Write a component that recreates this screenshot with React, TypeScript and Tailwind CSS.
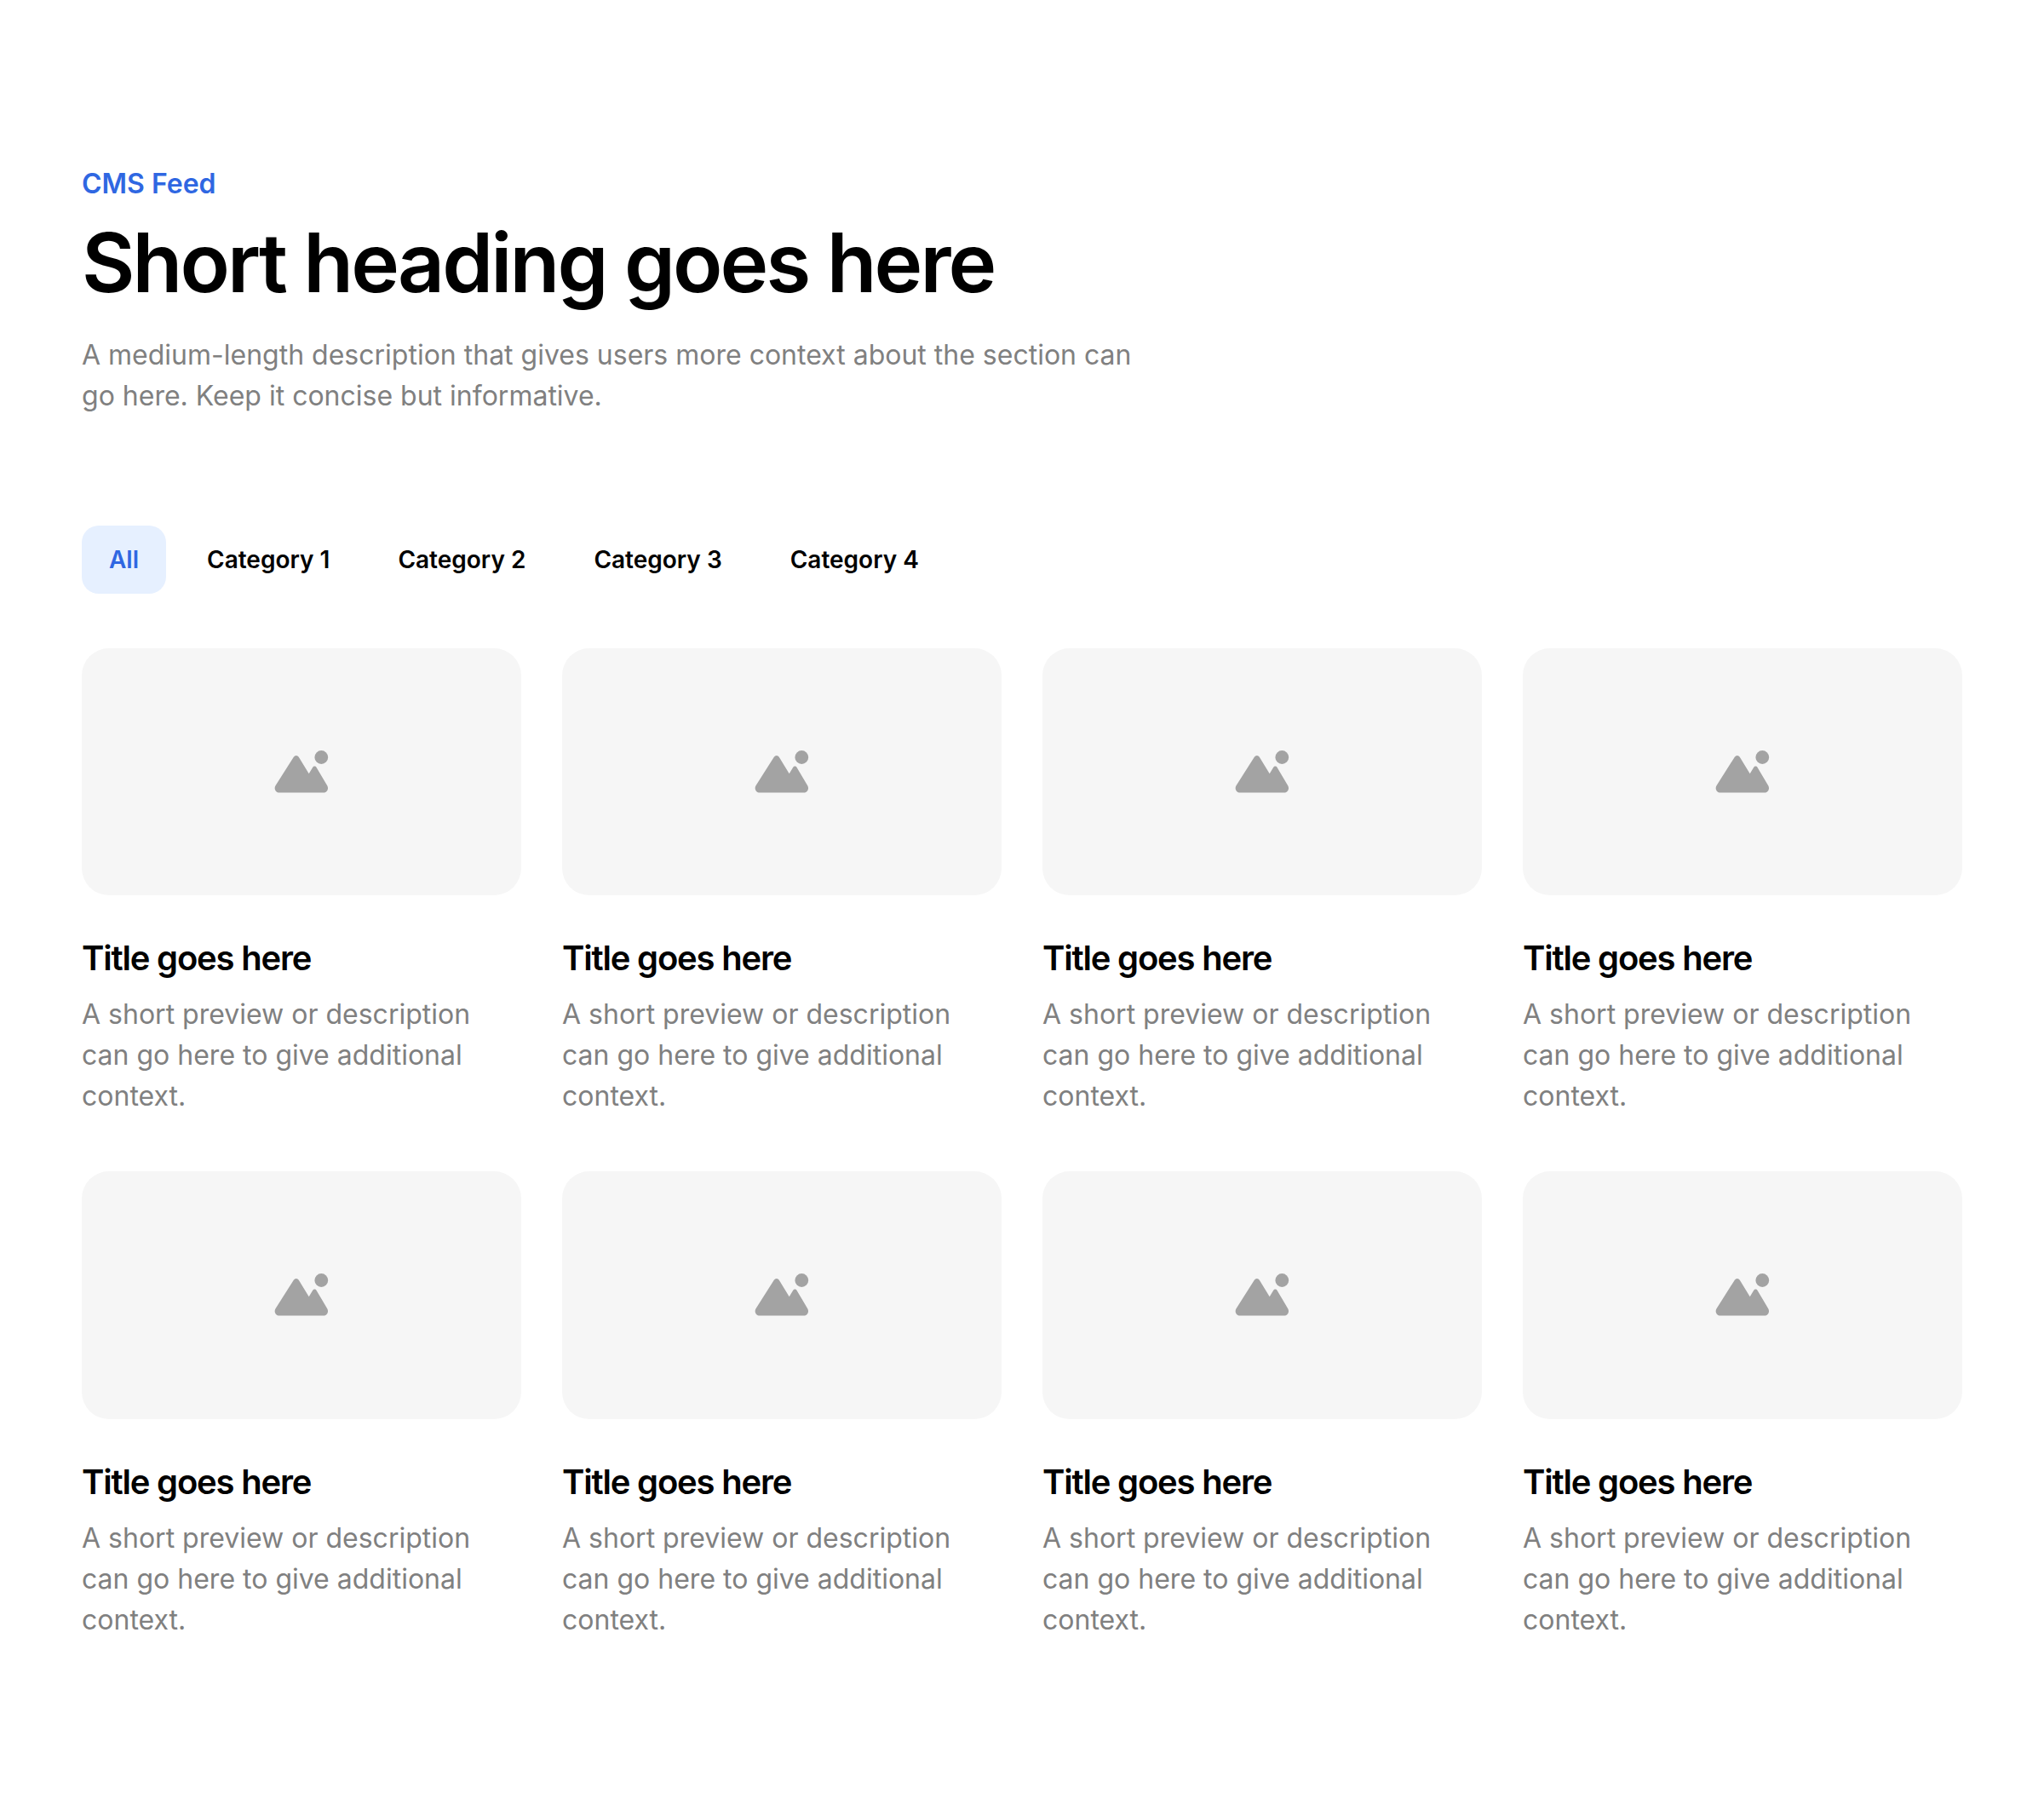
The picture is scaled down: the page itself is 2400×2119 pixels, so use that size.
import { useState } from "react";
import clsx from "clsx";

interface Post {
  id: number;
  title: string;
  description: string;
}

const categories = ["All", "Category 1", "Category 2", "Category 3", "Category 4"];

const posts: Post[] = Array.from({ length: 8 }, (_, i) => ({
  id: i + 1,
  title: "Title goes here",
  description: "A short preview or description can go here to give additional context.",
}));

function ImageIcon() {
  return (
    <svg viewBox="0 0 64 64" className="size-16" fill="currentColor" aria-hidden="true">
      <circle cx="55.3" cy="15" r="7.9" />
      <path d="M22.8 14.7a3.6 3.6 0 0 1 6 0L40.7 34.3l4.4-7.4a2.6 2.6 0 0 1 4.5 0L62.2 48.2c2.2 3.8-.2 8.4-4.6 8.4H6.2c-4.4 0-7-4.6-4.7-8.3Z" />
    </svg>
  );
}

function PostCard({ post }: { post: Post }) {
  return (
    <article>
      <div className="flex aspect-video items-center justify-center rounded-4xl bg-[#f6f6f6] text-[#a3a3a3]">
        <ImageIcon />
      </div>
      <h2 className="mt-12 text-[40px] leading-[52px] font-semibold tracking-[-0.03em]">
        {post.title}
      </h2>
      <p className="mt-4 text-[32px] leading-[48px] text-[#808080]">{post.description}</p>
    </article>
  );
}

export default function App() {
  const [active, setActive] = useState("All");

  return (
    <main className="min-h-screen bg-white px-24 py-48 font-['Inter',sans-serif] text-black">
      <header className="max-w-[1248px]">
        <p className="text-[32px] leading-[48px] font-semibold text-[#2f67e2]">CMS Feed</p>
        <h1 className="mt-4 text-8xl leading-[105px] font-semibold tracking-[-0.03em]">
          Short heading goes here
        </h1>
        <p className="mt-8 text-[32px] leading-[48px] text-[#808080]">
          A medium-length description that gives users more context about the section can go here.
          Keep it concise but informative.
        </p>
      </header>

      <nav className="mt-32 flex flex-wrap gap-4" aria-label="Categories">
        {categories.map((category) => (
          <button
            key={category}
            type="button"
            aria-pressed={category === active}
            onClick={() => setActive(category)}
            className={clsx(
              "h-20 rounded-[20px] px-8 text-[28px] leading-[40px] font-semibold",
              category === active ? "bg-[#e6f0ff] text-[#2f67e2]" : "text-black"
            )}
          >
            {category}
          </button>
        ))}
      </nav>

      <section className="mt-16 grid grid-cols-4 gap-x-12 gap-y-16">
        {posts.map((post) => (
          <PostCard key={post.id} post={post} />
        ))}
      </section>
    </main>
  );
}
